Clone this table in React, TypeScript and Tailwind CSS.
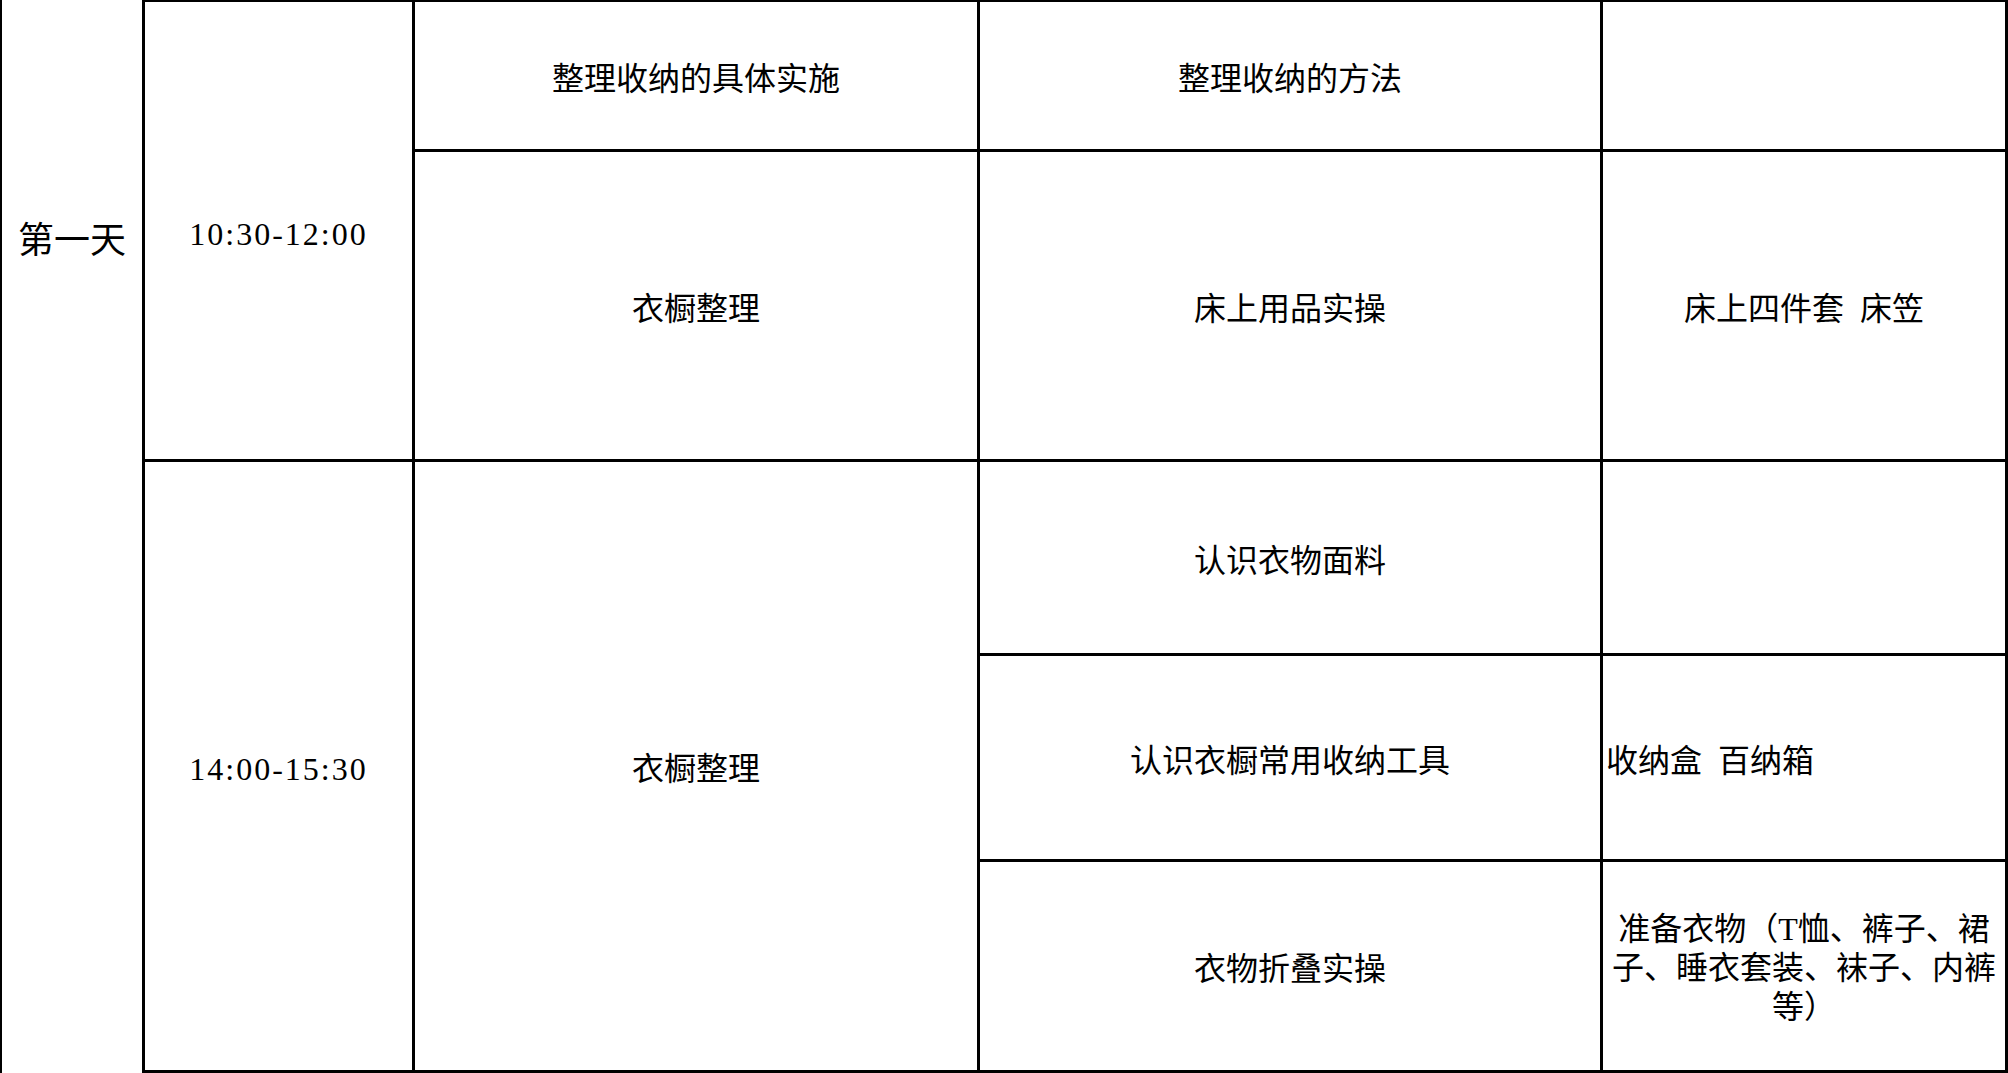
import React from "react";

const cell =
  "border-r-[3px] border-b-[3px] border-black flex items-center justify-center pt-[6px] text-[32px] leading-[38px] text-black whitespace-nowrap";

const bodyFont = {
  fontFamily: "'Liberation Serif', 'Noto Sans CJK SC', serif",
};

export default function App() {
  return (
    <div className="w-[2008px] h-[1073px] bg-white flex overflow-hidden">
      {/* Day column */}
      <div
        className="w-[145px] h-full border-l-2 border-r-[3px] border-black flex justify-center pt-[219px] text-[36px] leading-[36px] text-black"
        style={{ fontFamily: "'Noto Sans CJK SC', 'Noto Sans', sans-serif" }}
      >
        第一天
      </div>

      {/* Main table */}
      <div
        className="w-[1863px] h-full border-t-2 border-black grid grid-cols-[270px_565px_623px_405px] grid-rows-[150px_310px_194px_206px_211px]"
        style={bodyFont}
      >
        <div className={`${cell} row-span-2 tracking-[2px]`}>10:30-12:00</div>
        <div className={cell}>整理收纳的具体实施</div>
        <div className={cell}>整理收纳的方法</div>
        <div className={cell}></div>

        <div className={cell}>衣橱整理</div>
        <div className={cell}>床上用品实操</div>
        <div className={cell}>床上四件套{"\u2002"}床笠</div>

        <div className={`${cell} row-span-3 tracking-[2px]`}>14:00-15:30</div>
        <div className={`${cell} row-span-3`}>衣橱整理</div>
        <div className={cell}>认识衣物面料</div>
        <div className={cell}></div>

        <div className={cell}>认识衣橱常用收纳工具</div>
        <div className="border-r-[3px] border-b-[3px] border-black flex items-center justify-start pl-[3px] pt-[6px] text-[32px] leading-[38px] text-black whitespace-nowrap">
          收纳盒{"\u2002"}百纳箱
        </div>

        <div className={cell}>衣物折叠实操</div>
        <div className="border-r-[3px] border-b-[3px] border-black flex flex-col items-center justify-center pt-[4px] text-[32px] leading-[39px] text-black whitespace-nowrap text-center">
          <span className="block">准备衣物（T恤、裤子、裙</span>
          <span className="block">子、睡衣套装、袜子、内裤</span>
          <span className="block">等）</span>
        </div>
      </div>
    </div>
  );
}
